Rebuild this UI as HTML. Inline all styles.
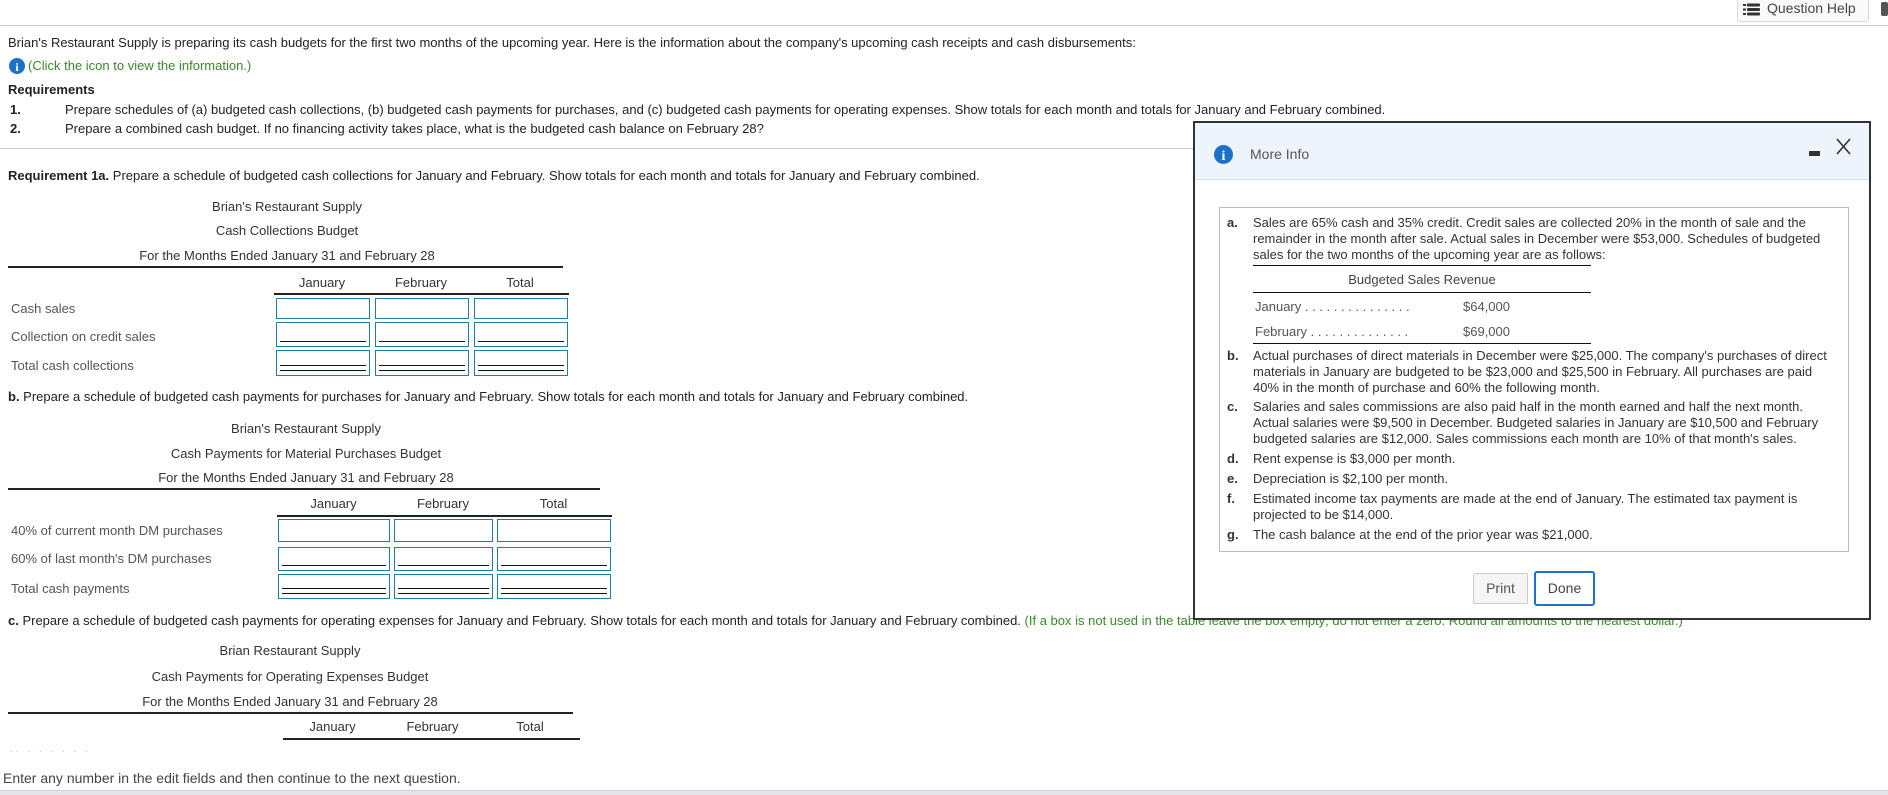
<!DOCTYPE html>
<html><head><meta charset="utf-8"><style>
*{margin:0;padding:0;box-sizing:border-box}
body{width:1888px;height:795px;position:relative;overflow:hidden;background:#fff;font-family:"Liberation Sans",Arial,sans-serif;font-size:13px;color:#222}
.t{position:absolute;white-space:nowrap;line-height:16px}
.c{text-align:center}
.h{position:absolute;height:0;border-top:2px solid #222}
.bx{position:absolute;border:1px solid #1f7d9e;background:#fff}
.u1::after{content:"";position:absolute;left:3px;right:3px;bottom:4px;border-top:1px solid #111}
.u2::after{content:"";position:absolute;left:3px;right:3px;bottom:4px;height:4px;border-top:1px solid #111;border-bottom:1px solid #111}
.g{color:#3a8a2a}
.m{color:#333}
</style></head><body>
<div style="position:absolute;left:1737px;top:0;width:132px;height:22px;border:1px solid #ddd;border-top:none;border-radius:0 0 3px 3px;background:#fafafa"></div>
<svg style="position:absolute;left:1743px;top:3px" width="17" height="14" viewBox="0 0 17 14"><g fill="#333"><rect x="0" y="1" width="3" height="2"/><rect x="4" y="0.5" width="13" height="3" rx="1"/><rect x="0" y="5.5" width="3" height="2"/><rect x="4" y="5" width="13" height="3" rx="1"/><rect x="0" y="10" width="3" height="2"/><rect x="4" y="9.5" width="13" height="3" rx="1"/></g></svg>
<div class="t" style="left:1767px;top:0;font-size:14px;color:#444">Question Help</div>
<div style="position:absolute;left:1881px;top:2px;width:7px;height:14px;background:#555;border-radius:2px"></div>
<div style="position:absolute;left:0;top:25px;width:1888px;border-top:1px solid #ccc"></div>

<div class="t" style="left:8px;top:35px">Brian's Restaurant Supply is preparing its cash budgets for the first two months of the upcoming year. Here is the information about the company's upcoming cash receipts and cash disbursements:</div>
<svg style="position:absolute;left:9px;top:58px" width="16" height="16" viewBox="0 0 16 16"><circle cx="8" cy="8" r="8" fill="#1a73c8"/><text x="8" y="13" font-family="Liberation Serif" font-weight="bold" font-size="12" fill="#fff" text-anchor="middle">i</text></svg>
<div class="t g" style="left:28px;top:58px">(Click the icon to view the information.)</div>
<div class="t" style="left:8px;top:82px;font-weight:bold">Requirements</div>
<div class="t" style="left:10px;top:102px;font-weight:bold">1.</div>
<div class="t" style="left:65px;top:102px">Prepare schedules of (a) budgeted cash collections, (b) budgeted cash payments for purchases, and (c) budgeted cash payments for operating expenses. Show totals for each month and totals for January and February combined.</div>
<div class="t" style="left:10px;top:121px;font-weight:bold">2.</div>
<div class="t" style="left:65px;top:121px">Prepare a combined cash budget. If no financing activity takes place, what is the budgeted cash balance on February 28?</div>
<div style="position:absolute;left:0;top:148px;width:1193px;border-top:1px solid #ccc"></div>

<div class="t" style="left:8px;top:168px"><b>Requirement 1a.</b> Prepare a schedule of budgeted cash collections for January and February. Show totals for each month and totals for January and February combined.</div>
<div class="t c m" style="left:87px;width:400px;top:199px">Brian's Restaurant Supply</div>
<div class="t c m" style="left:87px;width:400px;top:223px">Cash Collections Budget</div>
<div class="t c m" style="left:87px;width:400px;top:248px">For the Months Ended January 31 and February 28</div>
<div class="h" style="left:8px;top:266px;width:555px"></div>
<div class="t c m" style="left:276px;width:92px;top:275px">January</div>
<div class="t c m" style="left:374px;width:94px;top:275px">February</div>
<div class="t c m" style="left:473px;width:94px;top:275px">Total</div>
<div class="h" style="left:274px;top:293px;width:295px"></div>
<div class="t" style="left:11px;top:301px;color:#555">Cash sales</div>
<div class="t" style="left:11px;top:329px;color:#555">Collection on credit sales</div>
<div class="t" style="left:11px;top:358px;color:#555">Total cash collections</div>
<div class="bx" style="left:276px;top:298px;width:94px;height:21px"></div>
<div class="bx" style="left:375px;top:298px;width:94px;height:21px"></div>
<div class="bx" style="left:474px;top:298px;width:94px;height:21px"></div>
<div class="bx u1" style="left:276px;top:322px;width:94px;height:25px"></div>
<div class="bx u1" style="left:375px;top:322px;width:94px;height:25px"></div>
<div class="bx u1" style="left:474px;top:322px;width:94px;height:25px"></div>
<div class="bx u2" style="left:276px;top:350px;width:94px;height:26px"></div>
<div class="bx u2" style="left:375px;top:350px;width:94px;height:26px"></div>
<div class="bx u2" style="left:474px;top:350px;width:94px;height:26px"></div>

<div class="t" style="left:8px;top:389px"><b>b.</b> Prepare a schedule of budgeted cash payments for purchases for January and February. Show totals for each month and totals for January and February combined.</div>
<div class="t c m" style="left:106px;width:400px;top:421px">Brian's Restaurant Supply</div>
<div class="t c m" style="left:106px;width:400px;top:446px">Cash Payments for Material Purchases Budget</div>
<div class="t c m" style="left:106px;width:400px;top:470px">For the Months Ended January 31 and February 28</div>
<div class="h" style="left:8px;top:488px;width:592px"></div>
<div class="t c m" style="left:278px;width:111px;top:496px">January</div>
<div class="t c m" style="left:394px;width:98px;top:496px">February</div>
<div class="t c m" style="left:497px;width:113px;top:496px">Total</div>
<div class="h" style="left:277px;top:515px;width:335px"></div>
<div class="t" style="left:11px;top:523px;color:#555">40% of current month DM purchases</div>
<div class="t" style="left:11px;top:551px;color:#555">60% of last month's DM purchases</div>
<div class="t" style="left:11px;top:581px;color:#555">Total cash payments</div>
<div class="bx" style="left:278px;top:519px;width:112px;height:23px"></div>
<div class="bx" style="left:394px;top:519px;width:99px;height:23px"></div>
<div class="bx" style="left:497px;top:519px;width:114px;height:23px"></div>
<div class="bx u1" style="left:278px;top:547px;width:112px;height:24px"></div>
<div class="bx u1" style="left:394px;top:547px;width:99px;height:24px"></div>
<div class="bx u1" style="left:497px;top:547px;width:114px;height:24px"></div>
<div class="bx u2" style="left:278px;top:574px;width:112px;height:25px"></div>
<div class="bx u2" style="left:394px;top:574px;width:99px;height:25px"></div>
<div class="bx u2" style="left:497px;top:574px;width:114px;height:25px"></div>

<div class="t" style="left:8px;top:613px"><b>c.</b> Prepare a schedule of budgeted cash payments for operating expenses for January and February. Show totals for each month and totals for January and February combined. <span class="g">(If a box is not used in the table leave the box empty; do not enter a zero. Round all amounts to the nearest dollar.)</span></div>
<div class="t c m" style="left:90px;width:400px;top:643px">Brian Restaurant Supply</div>
<div class="t c m" style="left:90px;width:400px;top:669px">Cash Payments for Operating Expenses Budget</div>
<div class="t c m" style="left:90px;width:400px;top:694px">For the Months Ended January 31 and February 28</div>
<div class="h" style="left:8px;top:712px;width:565px"></div>
<div class="t c m" style="left:290px;width:85px;top:719px">January</div>
<div class="t c m" style="left:385px;width:95px;top:719px">February</div>
<div class="t c m" style="left:490px;width:80px;top:719px">Total</div>
<div class="h" style="left:283px;top:738px;width:297px"></div>
<div class="t" style="left:10px;top:742px;color:#bbb;font-size:10px;letter-spacing:3px">.. . . . .   .    .</div>

<div class="t" style="left:3px;top:770px;font-size:14px;color:#444">Enter any number in the edit fields and then continue to the next question.</div>
<div style="position:absolute;left:0;top:790px;width:1888px;height:5px;background:#e4e6ea;border-top:1px solid #ccd"></div>

<div style="position:absolute;left:1193px;top:121px;width:678px;height:499px;border:2px solid #333;background:#fff">
  <div style="position:absolute;left:0;top:0;right:0;height:57px;background:#eef4fb;border-bottom:1px solid #cfe3f5"></div>
  <svg style="position:absolute;left:19px;top:22px" width="19" height="19" viewBox="0 0 19 19"><circle cx="9.5" cy="9.5" r="9.5" fill="#1a73c8"/><text x="9.5" y="15" font-family="Liberation Serif" font-weight="bold" font-size="14" fill="#fff" text-anchor="middle">i</text></svg>
  <div class="t" style="left:55px;top:23px;font-size:14px;color:#555">More Info</div>
  <div style="position:absolute;left:614px;top:28px;width:11px;height:5px;background:#333"></div>
  <svg style="position:absolute;left:640px;top:15px" width="17" height="17" viewBox="0 0 17 17"><path d="M2 1L15 16M15 1L2 16" stroke="#333" stroke-width="1.6"/></svg>
  <div style="position:absolute;left:24px;top:84px;width:630px;height:345px;border:1px solid #bbb"></div>
  <div style="position:absolute;left:32px;top:92px;width:600px;font-size:13px;line-height:16px;color:#333">
    <div style="position:relative;padding-left:26px"><b style="position:absolute;left:0">a.</b>Sales are 65% cash and 35% credit. Credit sales are collected 20% in the month of sale and the remainder in the month after sale. Actual sales in December were $53,000. Schedules of budgeted sales for the two months of the upcoming year are as follows:</div>
    <div style="margin-left:26px;width:338px;border-top:1px solid #111;margin-top:2px;height:27px;line-height:27px;text-align:center;color:#444">Budgeted Sales Revenue</div>
    <div style="margin-left:26px;width:338px;border-top:1px solid #111;position:relative;height:52px;border-bottom:1px solid #111;color:#555">
      <div class="t" style="left:2px;top:6px">January . . . . . . . . . . . . . . .</div><div class="t" style="left:210px;top:6px">$64,000</div>
      <div class="t" style="left:2px;top:31px">February . . . . . . . . . . . . . .</div><div class="t" style="left:210px;top:31px">$69,000</div>
    </div>
    <div style="position:relative;padding-left:26px;margin-top:4px"><b style="position:absolute;left:0">b.</b>Actual purchases of direct materials in December were $25,000. The company's purchases of direct materials in January are budgeted to be $23,000 and $25,500 in February. All purchases are paid 40% in the month of purchase and 60% the following month.</div>
    <div style="position:relative;padding-left:26px;margin-top:3px"><b style="position:absolute;left:0">c.</b>Salaries and sales commissions are also paid half in the month earned and half the next month. Actual salaries were $9,500 in December. Budgeted salaries in January are $10,500 and February budgeted salaries are $12,000. Sales commissions each month are 10% of that month's sales.</div>
    <div style="position:relative;padding-left:26px;margin-top:4px"><b style="position:absolute;left:0">d.</b>Rent expense is $3,000 per month.</div>
    <div style="position:relative;padding-left:26px;margin-top:4px"><b style="position:absolute;left:0">e.</b>Depreciation is $2,100 per month.</div>
    <div style="position:relative;padding-left:26px;margin-top:4px;width:590px"><b style="position:absolute;left:0">f.</b>Estimated income tax payments are made at the end of January. The estimated tax payment is projected to be $14,000.</div>
    <div style="position:relative;padding-left:26px;margin-top:4px"><b style="position:absolute;left:0">g.</b>The cash balance at the end of the prior year was $21,000.</div>
  </div>
  <div style="position:absolute;left:278px;top:450px;width:55px;height:31px;border:1px solid #ccc;background:#f5f5f5;border-radius:2px;text-align:center;line-height:29px;font-size:14px;color:#555">Print</div>
  <div style="position:absolute;left:339px;top:448px;width:61px;height:35px;border:2px solid #1a73c8;background:#fff;border-radius:3px;text-align:center;line-height:31px;font-size:14px;color:#444">Done</div>
</div>
</body></html>
